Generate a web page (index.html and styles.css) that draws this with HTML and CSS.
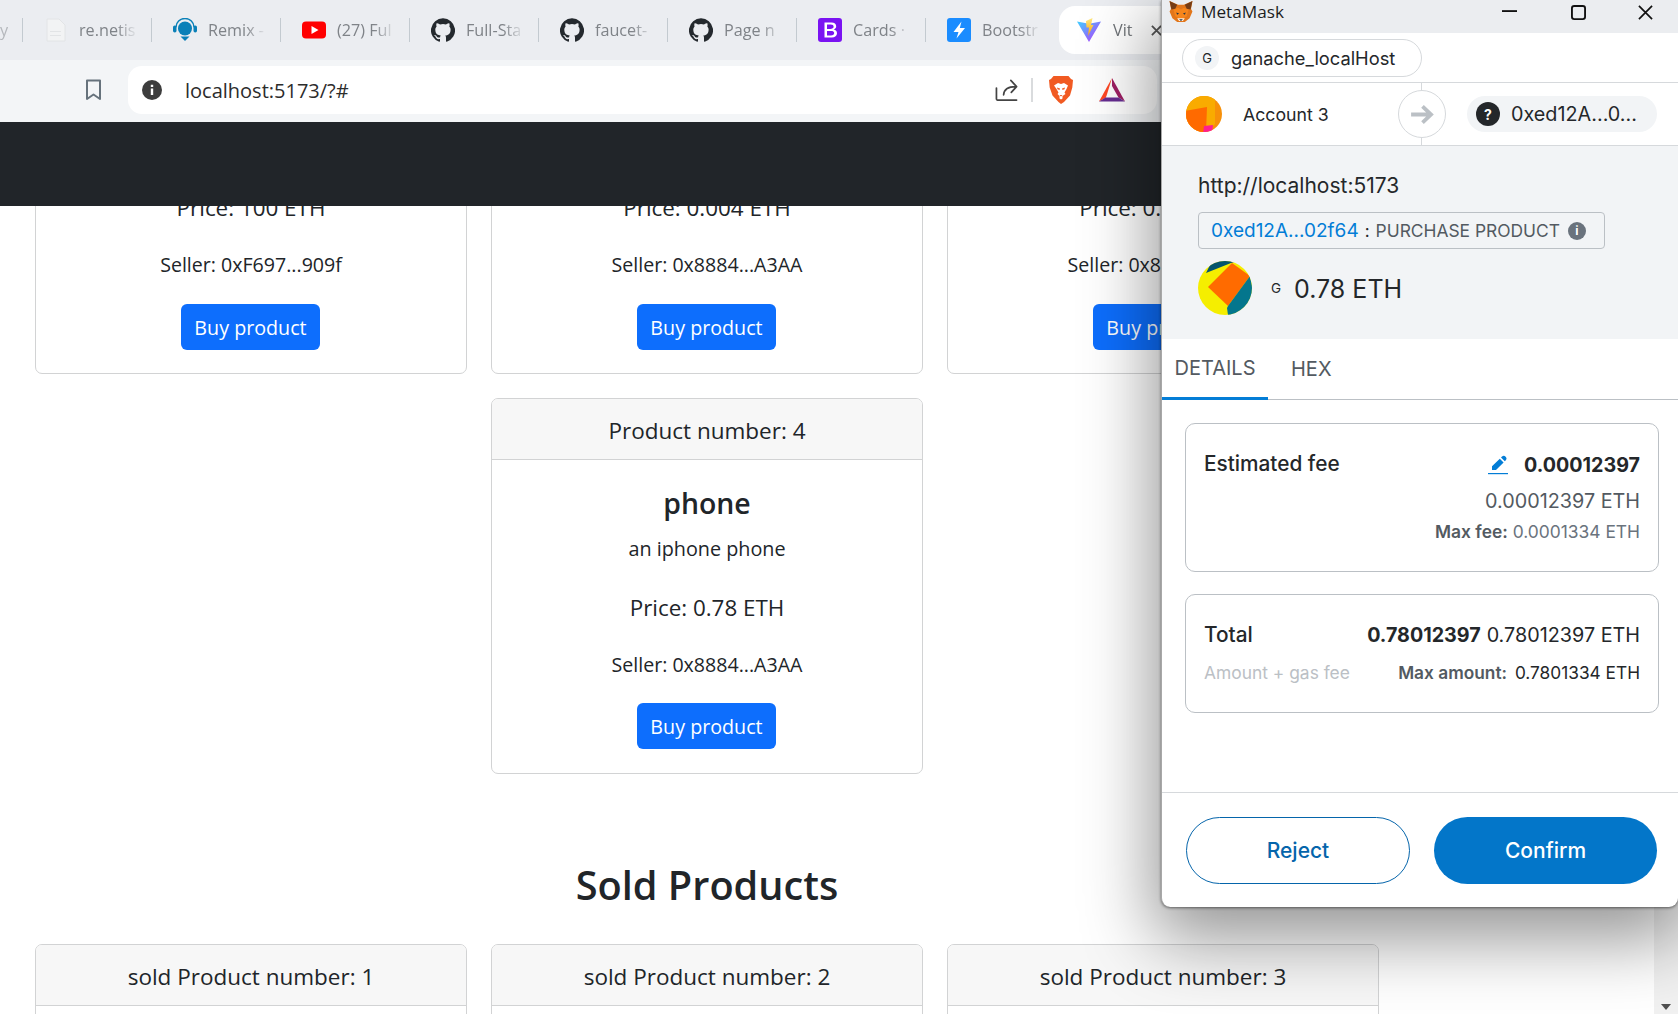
FILE: index.html
```html
<!DOCTYPE html>
<html lang="en">
<head>
<meta charset="utf-8">
<title>Vite App</title>
<link rel="stylesheet" href="styles.css">
</head>
<body>
<svg class="defs" width="0" height="0" aria-hidden="true">
  <symbol id="gh" viewBox="0 0 24 24"><path fill="#24292e" d="M12 .3a12 12 0 0 0-3.8 23.4c.6.1.8-.3.8-.6v-2c-3.3.7-4-1.6-4-1.6-.6-1.4-1.4-1.8-1.4-1.8-1-.7.1-.7.1-.7 1.2 0 1.9 1.2 1.9 1.2 1 1.8 2.8 1.3 3.5 1 0-.8.4-1.3.7-1.6-2.7-.3-5.5-1.3-5.5-6 0-1.2.5-2.3 1.3-3.1-.2-.4-.6-1.6 0-3.2 0 0 1-.3 3.4 1.2a11.5 11.5 0 0 1 6 0c2.3-1.5 3.3-1.2 3.3-1.2.6 1.6.2 2.8 0 3.2.9.8 1.3 1.9 1.3 3.2 0 4.6-2.8 5.6-5.5 5.9.5.4.9 1 .9 2.2v3.3c0 .3.1.7.8.6A12 12 0 0 0 12 .3"/></symbol>
</svg>
<div class="screen">
  <div class="tabstrip">
    <div class="tab tab-cut"><span class="tab-text">y</span></div>
    <div class="tab">
      <svg class="fav" viewBox="0 0 20 24"><path fill="#f2f3f4" stroke="#e2e4e6" d="M1 1h12l6 6v16H1z"/><path fill="#e2e4e6" d="M4 13h11v1H4zM4 17h11v1H4z"/></svg>
      <span class="tab-text">re.netis</span>
    </div>
    <div class="tab">
      <svg class="fav" viewBox="0 0 24 24"><path fill="none" stroke="#0a80b8" stroke-width="1.500" d="M3 9a9 8.500 0 0 1 18 0"/><rect y="7.500" width="3.500" height="7" rx="1.700" fill="#0a80b8"/><rect x="20.500" y="7.500" width="3.500" height="7" rx="1.700" fill="#0a80b8"/><circle cx="12" cy="10.500" r="7" fill="#0a80b8"/><path fill="#0a80b8" d="M7.500 18.500h9L12 23z"/></svg>
      <span class="tab-text">Remix -</span>
    </div>
    <div class="tab">
      <svg class="fav" viewBox="0 0 24 24"><rect y="3.500" width="24" height="17" rx="4" fill="#f00"/><path fill="#fff" d="M9.500 8v8l7-4z"/></svg>
      <span class="tab-text">(27) Ful</span>
    </div>
    <div class="tab">
      <svg class="fav"><use href="#gh"/></svg>
      <span class="tab-text">Full-Sta</span>
    </div>
    <div class="tab">
      <svg class="fav"><use href="#gh"/></svg>
      <span class="tab-text">faucet-</span>
    </div>
    <div class="tab">
      <svg class="fav"><use href="#gh"/></svg>
      <span class="tab-text">Page n</span>
    </div>
    <div class="tab">
      <svg class="fav" viewBox="0 0 24 24"><rect width="24" height="24" rx="3" fill="#7a12f2"/><path fill="#fff" fill-rule="evenodd" d="M6.500 4.500h7c3 0 4.700 1.500 4.700 3.800 0 1.600-1 2.900-2.500 3.300 2 .3 3.300 1.700 3.300 3.700 0 2.700-2 4.200-5.200 4.200H6.500zM9 6.600v4.300h3.300c2 0 3.300-.8 3.300-2.200s-1-2.100-2.800-2.100zM9 13v4.400h4c2 0 3.200-.8 3.200-2.300S15 13 12.800 13z"/></svg>
      <span class="tab-text">Cards ·</span>
    </div>
    <div class="tab tab-last">
      <svg class="fav" viewBox="0 0 24 24"><rect width="24" height="24" rx="3" fill="#1a8cff"/><path fill="#fff" d="M14.500 3.500 6.500 14h5l-2 6.500L18 10h-5.200z"/></svg>
      <span class="tab-text">Bootstr</span>
    </div>
    <div class="tab tab-active">
      <svg class="fav" viewBox="0 0 24 24"><defs><linearGradient id="vite-a" x1="0" y1="0" x2="1" y2="1"><stop offset="0" stop-color="#41d1ff"/><stop offset="1" stop-color="#bd34fe"/></linearGradient><linearGradient id="vite-b" x1="0" y1="0" x2="0" y2="1"><stop offset="0" stop-color="#ffea83"/><stop offset="1" stop-color="#ffa800"/></linearGradient></defs><path fill="url(#vite-a)" d="M0 3.500 12 24 24 3.500l-8 1.500-4 .8-4-.8z"/><path fill="url(#vite-b)" d="M9 3 15.500 0 14 7h2.500L11 18l1-8.500H9.500z"/></svg>
      <span class="tab-text tab-text-active">Vit</span>
      <svg class="tab-close" viewBox="0 0 12 12"><path stroke="#555" stroke-width="2" d="m1 1 10 10M11 1 1 11"/></svg>
    </div>
  </div>

  <div class="toolbar">
    <svg class="bookmark" viewBox="0 0 17 22"><path fill="none" stroke="#66727c" stroke-width="2" stroke-linejoin="round" d="M2 1.500h13V20l-6.500-4.500L2 20z"/></svg>
    <div class="address">
      <svg class="site-info" viewBox="0 0 20 20"><circle cx="10" cy="10" r="10" fill="#3d3d3d"/><path fill="#fff" d="M8.800 8.500h2.400V15H8.800zM8.800 4.800h2.400v2.300H8.800z"/></svg>
      <span class="url">localhost:5173/?#</span>
      <div class="address-actions">
        <svg class="share" viewBox="0 0 24 24"><path fill="none" stroke="#444" stroke-width="1.800" stroke-linecap="round" stroke-linejoin="round" d="M1.500 10v11.500a1 1 0 0 0 1 1h20M9 17c.5-6 5-8.500 12.500-8.500M16.500 2l6 6.500-5.500 6"/></svg>
        <span class="addr-sep"></span>
        <svg class="brave" viewBox="0 0 24 28"><path fill="#f15a22" d="M4.500 0h15l2.500 3 2 1-.7 7.500-2.300 8-6 6.500L12 28l-2.500-2-6-6.500-2.800-8L0 4l2-1z"/><path fill="#fff" d="M5 9.500 9 7l3 1 3-1 4 2.500-1.500 3.500-2 3.500 1 1.500L13.500 20v2.500l-1.500 1-1.500-1V20L8.500 18l1-1.500-2-3.500z"/><path fill="#f15a22" d="M8 11.500l3 1-.5 1.500-2-.8zM16 11.500l-3 1 .5 1.500 2-.8zM10.500 19h3L12 20.500z"/></svg>
        <svg class="bat" viewBox="0 0 26 24"><path fill="#ff4724" d="M13 0 0 23.500l7-4z"/><path fill="#9e1f63" d="m13 0 13 23.500-6.500-4L13 8z"/><path fill="#662d91" d="M0 23.500h26l-6.500-4H6.500z"/><path fill="#fff" d="M13 10.500 7.500 19h11z"/></svg>
      </div>
    </div>
  </div>

  <div class="viewport">
    <div class="navbar"></div>
    <main class="page">
      <section class="card-row">
        <article class="card card-cut">
          <div class="card-body">
            <p class="card-price">Price: 100 ETH</p>
            <p class="card-seller">Seller: 0xF697...909f</p>
            <a class="buy" href="#">Buy product</a>
          </div>
        </article>
        <article class="card card-cut">
          <div class="card-body">
            <p class="card-price">Price: 0.004 ETH</p>
            <p class="card-seller">Seller: 0x8884...A3AA</p>
            <a class="buy" href="#">Buy product</a>
          </div>
        </article>
        <article class="card card-cut">
          <div class="card-body">
            <p class="card-price">Price: 0.005 ETH</p>
            <p class="card-seller">Seller: 0x8884...A3AA</p>
            <a class="buy" href="#">Buy product</a>
          </div>
        </article>
        <article class="card">
          <header class="card-head">Product number: 4</header>
          <div class="card-body">
            <h5 class="card-name">phone</h5>
            <p class="card-desc">an iphone phone</p>
            <p class="card-price">Price: 0.78 ETH</p>
            <p class="card-seller">Seller: 0x8884...A3AA</p>
            <a class="buy" href="#">Buy product</a>
          </div>
        </article>
      </section>
      <h2 class="section-title">Sold Products</h2>
      <section class="card-row">
        <article class="card"><header class="card-head">sold Product number: 1</header><div class="card-body"></div></article>
        <article class="card"><header class="card-head">sold Product number: 2</header><div class="card-body"></div></article>
        <article class="card"><header class="card-head">sold Product number: 3</header><div class="card-body"></div></article>
      </section>
    </main>
    <div class="scrollbar"><span class="scroll-arrow"></span></div>
  </div>

  <aside class="popup">
    <div class="win-title">
      <svg class="fox" viewBox="0 0 24 22"><path fill="#e2761b" d="M0 0l9 4h6l9-4-1.500 8.500L24 11l-3 7-5 4H8l-5-4-3-7 1.500-2.500z"/><path fill="#f6851b" d="M4 9l5-2 3 2 3-2 5 2-2 7-4 2h-4l-4-2z"/><path fill="#763d16" d="M0 0l8 4-2 4-4 1zM24 0l-8 4 2 4 4 1z"/><path fill="#fff1e0" d="M8 18h8l-2 3h-4z"/><path fill="#233447" d="M7 12l3 1-2 1.500zM17 12l-3 1 2 1.500zM10 19h4l-2 2z"/></svg>
      <span class="win-name">MetaMask</span>
      <div class="win-controls">
        <svg class="win-btn win-min" viewBox="0 0 16 16"><path stroke="#111" stroke-width="2" d="M0 6.500h16"/></svg>
        <svg class="win-btn" viewBox="0 0 16 16"><rect x="1" y="1" width="14" height="14" rx="2.500" fill="none" stroke="#111" stroke-width="2"/></svg>
        <svg class="win-btn" viewBox="0 0 16 16"><path stroke="#111" stroke-width="1.800" d="m1 1 14 14M15 1 1 15"/></svg>
      </div>
    </div>

    <div class="net-row">
      <div class="net-pill"><span class="net-dot">G</span><span class="net-name">ganache_localHost</span></div>
    </div>

    <div class="acct-row">
      <div class="acct-from">
        <svg class="acct-avatar" viewBox="0 0 36 36"><defs><clipPath id="av1"><circle cx="18" cy="18" r="18"/></clipPath></defs><g clip-path="url(#av1)"><rect width="36" height="36" fill="#f79009"/><path fill="#f9ab00" d="M0 0h29v28l-8 8H0z"/><path fill="#ff6a00" d="M-2 15l23-4-1 25H-2z"/><path fill="#ff1f8f" d="M18 30l9-1-1 9h-9z"/></g></svg>
        <span class="acct-name">Account 3</span>
      </div>
      <div class="acct-arrow">
        <svg viewBox="0 0 24 20"><path fill="none" stroke="#bbc0c5" stroke-width="4" d="M0 10h21M12 1.500 21 10l-9 8.500"/></svg>
      </div>
      <div class="acct-to">
        <span class="acct-q">?</span>
        <span class="acct-addr">0xed12A...0...</span>
      </div>
    </div>

    <div class="summary">
      <div class="origin">http://localhost:5173</div>
      <div class="method">
        <span class="method-addr">0xed12A...02f64</span>
        <span class="method-colon">:</span>
        <span class="method-name">PURCHASE PRODUCT</span>
        <span class="method-info">i</span>
      </div>
      <div class="amount">
        <svg class="amount-avatar" viewBox="0 0 54 54"><defs><clipPath id="av2"><circle cx="27" cy="27" r="27"/></clipPath></defs><g clip-path="url(#av2)"><rect width="54" height="54" fill="#f5ee00"/><path fill="#04546e" d="M8 12 14 0h26l-7 2z"/><path fill="#ff6b00" d="M34 2 52 15 30 45 10 26z"/><path fill="#04768d" d="M52 15 60 54H30l-1-7 1-2z"/></g></svg>
        <span class="amount-g">G</span>
        <span class="amount-val">0.78 ETH</span>
      </div>
    </div>

    <div class="mm-tabs">
      <span class="mm-tab mm-tab-on">DETAILS</span>
      <span class="mm-tab">HEX</span>
    </div>

    <div class="mm-content">
      <div class="fee-box fee-est">
        <div class="fee-line">
          <span class="fee-label">Estimated fee</span>
          <span class="fee-right">
            <svg class="pencil" viewBox="0 0 20 20"><path fill="#037dd6" d="M14 1.500a2.700 2.700 0 0 1 3.800 3.800l-1 1-3.800-3.800zM11.800 3.700l3.800 3.800-7.600 7.600H4v-3.900z"/><path fill="#037dd6" d="M0 18h20v1.200H0z"/></svg>
            <b class="fee-bold">0.00012397</b>
          </span>
        </div>
        <div class="fee-sub">0.00012397 ETH</div>
        <div class="fee-small"><b>Max fee:</b> 0.0001334 ETH</div>
      </div>
      <div class="fee-box fee-total">
        <div class="fee-line">
          <span class="fee-label">Total</span>
          <span class="fee-right"><b class="fee-bold">0.78012397</b> <span class="fee-dark">0.78012397 ETH</span></span>
        </div>
        <div class="fee-line fee-line2">
          <span class="fee-hint">Amount + gas fee</span>
          <span class="fee-small2"><b>Max amount:</b> <span class="fee-dark2">0.7801334 ETH</span></span>
        </div>
      </div>
    </div>

    <div class="mm-footer">
      <a class="mm-btn mm-reject" href="#">Reject</a>
      <a class="mm-btn mm-confirm" href="#">Confirm</a>
    </div>
  </aside>
</div>
</body>
</html>
```

FILE: styles.css
```css
* { box-sizing: border-box; }
html, body { margin: 0; padding: 0; }
body { font-family: "Open Sans", "Noto Sans", sans-serif; color: #212529; background: #fff; }
.defs { position: absolute; }
.screen { position: relative; width: 1678px; height: 1014px; overflow: hidden; display: flex; flex-direction: column; }

/* browser chrome */
.tabstrip { height: 60px; flex: none; background: #ebedf1; display: flex; align-items: center; }
.tab { position: relative; flex: none; width: 129px; height: 24px; padding-left: 21px; display: flex; align-items: center; border-right: 1.500px solid #c3cad0; }
.tab-cut { width: 23px; padding-left: 0; justify-content: flex-end; overflow: hidden; }
.tab-cut .tab-text { width: auto; margin: 0 14px 1px 0; opacity: .5; -webkit-mask-image: none; mask-image: none; }
.tab-last { border-right: 0; }
.fav { flex: none; width: 24px; height: 24px; }
.tab-text { margin: 0 0 1px 11px; width: 62px; overflow: hidden; white-space: nowrap; font-size: 16.200px; color: #7f8388; -webkit-mask-image: linear-gradient(90deg, #000 60%, transparent 95%); mask-image: linear-gradient(90deg, #000 60%, transparent 95%); }
.tab-active { height: 48px; width: 135px; margin-left: 4px; padding-left: 18px; background: #fff; border: 0; border-radius: 16px 0 0 16px; }
.tab-text-active { width: 28px; margin-left: 12px; color: #6f7377; }
.tab-close { width: 11px; height: 11px; margin-left: 10px; flex: none; }

.toolbar { height: 62px; flex: none; background: #f3f5f7; display: flex; align-items: flex-start; padding: 6px 0 0 85px; position: relative; z-index: 1; }
.bookmark { width: 17px; height: 22px; margin: 13px 26px 0 0; flex: none; }
.address { width: 1029px; height: 48px; background: #fff; border-radius: 14px; display: flex; align-items: center; padding: 0 32px 0 14px; }
.site-info { width: 20px; height: 20px; flex: none; }
.url { margin-left: 23px; font-size: 20px; color: #2c2c2c; }
.address-actions { margin-left: auto; display: flex; align-items: center; }
.share { width: 23px; height: 24px; }
.addr-sep { width: 2px; height: 24px; background: #d9dbdd; margin: 0 16px 0 13px; }
.brave { width: 24px; height: 28px; margin-right: 26px; }
.bat { width: 26px; height: 24px; }

/* page */
.viewport { position: relative; flex: 1; min-height: 0; overflow: hidden; display: flex; }
.navbar { position: absolute; left: 0; right: 0; top: 0; height: 84px; background: #212529; z-index: 2; }
.page { flex: 1; min-width: 0; margin-top: 70px; padding-left: 35px; }
.scrollbar { position: relative; width: 24px; flex: none; background: #f1f1f1; }
.scroll-arrow { position: absolute; left: 7px; bottom: 4px; border: 5px solid transparent; border-top: 6px solid #505050; border-bottom: 0; }
.card-row { width: 1344px; display: flex; flex-wrap: wrap; justify-content: center; gap: 24px; }
.card { width: 432px; border: 1px solid #d2d3d4; border-radius: 7px; background: #fff; overflow: hidden; }
.card-head { height: 61px; padding-top: 2px; background: #f7f7f7; border-bottom: 1px solid #d2d3d4; display: flex; align-items: center; justify-content: center; font-size: 22.500px; color: #212529; }
.card-body { padding: 25px 0 24px; text-align: center; display: flex; flex-direction: column; align-items: center; min-height: 313px; }
.card-name { margin: 0; font-size: 28.400px; line-height: 36px; font-weight: 600; }
.card-desc { margin: 13px 0 0; font-size: 19.800px; line-height: 29px; }
.card-price { margin: 30px 0 0; font-size: 22.400px; line-height: 29px; }
.card-seller { margin: 28px 0 0; font-size: 19.600px; line-height: 29px; }
.card-cut .card-body { padding: 0 0 23px; min-height: 0; }
.card-cut .card-price { margin-top: 0; }
.buy { margin: 24px 1px 0 0; width: 139px; height: 46px; border-radius: 6px; background: #0d6efd; color: #fff; text-decoration: none; font-size: 19.700px; display: flex; align-items: center; justify-content: center; }
.card-cut .buy { margin-top: 25px; }
.section-title { margin: 81px 0 28px; width: 1344px; text-align: center; font-size: 39.700px; line-height: 61px; font-weight: 600; color: #212529; }

/* metamask */
.popup { position: absolute; left: 1161px; top: 0; width: 517px; height: 907px; background: #fff; border-left: 1px solid #a8a8a8; border-radius: 0 0 9px 9px; box-shadow: 0 1px 3px rgba(0,0,0,.5), 0 24px 70px 8px rgba(0,0,0,.42); z-index: 5; display: flex; flex-direction: column; font-family: "Inter", "Lato", sans-serif; color: #24272a; }
.win-title { height: 33px; flex: none; background: #ebedf0; display: flex; align-items: center; padding: 0 25px 9px 7px; font-family: "Open Sans", sans-serif; }
.fox { width: 24px; height: 21px; flex: none; margin-top: -2px; }
.win-name { margin: -2px 0 0 8px; font-size: 17.200px; color: #1d1d1d; }
.win-controls { margin-left: auto; display: flex; gap: 52px; }
.win-btn { width: 15px; height: 15px; }
.win-min { position: relative; left: -2px; }
.net-row { height: 50px; flex: none; padding: 6px 0 0 20px; border-bottom: 1px solid #d6d9dc; }
.net-pill { width: 240px; height: 38px; border: 1px solid #d6d9dc; border-radius: 19px; display: flex; align-items: center; padding-left: 12px; }
.net-dot { width: 24px; height: 24px; border-radius: 50%; background: #f2f4f6; display: flex; align-items: center; justify-content: center; font-size: 13px; color: #24272a; }
.net-name { margin-left: 12px; font-size: 18.300px; white-space: nowrap; }
.acct-row { position: relative; height: 63px; flex: none; display: flex; align-items: center; border-bottom: 1px solid #d6d9dc; padding: 0 21px 0 24px; }
.acct-from { display: flex; align-items: center; width: 257px; }
.acct-avatar { width: 36px; height: 36px; flex: none; }
.acct-name { margin-left: 21px; font-size: 17.700px; color: #24272a; white-space: nowrap; }
.acct-row::before { content: ""; position: absolute; left: 259px; top: 0; bottom: 0; width: 1px; background: #d6d9dc; }
.acct-arrow { position: relative; width: 48px; height: 48px; margin-left: -22px; border: 1px solid #d6d9dc; border-radius: 50%; background: #fff; display: flex; align-items: center; justify-content: center; flex: none; }
.acct-arrow svg { width: 23px; height: 19px; }
.acct-to { margin-left: 21px; width: 190px; height: 36px; border-radius: 18px; background: #f2f4f6; display: flex; align-items: center; padding-left: 9px; flex: none; }
.acct-q { width: 24px; height: 24px; border-radius: 50%; background: #24272a; color: #fff; font-size: 14px; font-weight: 700; display: flex; align-items: center; justify-content: center; flex: none; }
.acct-addr { margin-left: 11px; font-size: 19.800px; white-space: nowrap; }
.summary { height: 193px; flex: none; background: #f2f4f6; padding: 27px 0 0 36px; }
.origin { font-size: 21px; line-height: 26px; }
.method { margin-top: 13px; width: 407px; height: 37px; border: 1px solid #bbc0c5; border-radius: 4px; display: flex; align-items: center; padding-left: 12px; }
.method-addr { color: #037dd6; font-size: 19px; white-space: nowrap; }
.method-colon { margin: 0 6px; font-size: 17px; }
.method-name { color: #535a61; font-size: 17.400px; white-space: nowrap; }
.method-info { margin-left: 8px; width: 18px; height: 18px; border-radius: 50%; background: #6a737d; color: #fff; font-size: 12px; font-weight: 700; display: flex; align-items: center; justify-content: center; }
.amount { margin-top: 12px; display: flex; align-items: center; }
.amount-avatar { width: 54px; height: 54px; flex: none; }
.amount-g { margin-left: 19px; font-size: 13.500px; color: #24272a; }
.amount-val { margin: 2px 0 0 13px; font-size: 25px; }
.mm-tabs { height: 61px; flex: none; display: flex; border-bottom: 1px solid #bbc0c5; }
.mm-tab { width: 106px; margin-bottom: -1px; display: flex; align-items: center; justify-content: center; font-size: 20px; color: #535a61; padding: 0 0 2px; }
.mm-tab + .mm-tab { width: auto; padding: 0 23px 2px; }
.mm-tab-on { border-bottom: 3px solid #037dd6; padding-bottom: 0; }
.mm-content { flex: 1; padding: 23px 19px 0 23px; display: flex; flex-direction: column; gap: 22px; }
.fee-box { border: 1px solid #bbc0c5; border-radius: 10px; padding: 0 18px; }
.fee-est { height: 149px; padding-top: 25px; }
.fee-total { height: 119px; padding-top: 25px; }
.fee-line { display: flex; justify-content: space-between; align-items: center; height: 28px; }
.fee-line2 { margin-top: 10px; }
.fee-label { font-size: 20.800px; font-weight: 500; color: #24272a; white-space: nowrap; }
.fee-right { display: flex; align-items: center; gap: 6px; white-space: nowrap; padding-top: 2px; }
.fee-bold { font-size: 19.700px; font-weight: 700; }
.fee-est .fee-right { padding-top: 4px; }
.fee-est .fee-bold { margin-left: 10px; }
.pencil { width: 20px; height: 20px; }
.fee-sub { text-align: right; font-size: 19.800px; line-height: 28px; margin-top: 10px; color: #535a61; }
.fee-small { text-align: right; font-size: 17.400px; line-height: 24px; margin-top: 5px; color: #6a737d; }
.fee-small b { font-weight: 600; color: #535a61; }
.fee-dark { font-size: 19.800px; }
.fee-hint { font-size: 17.400px; color: #bbc0c5; white-space: nowrap; }
.fee-small2 { font-size: 17.300px; white-space: nowrap; }
.fee-small2 b { font-weight: 600; color: #535a61; }
.fee-dark2 { margin-left: 3px; color: #24272a; }
.mm-footer { height: 115px; flex: none; border-top: 1px solid #d6d9dc; display: flex; justify-content: space-between; align-items: flex-start; padding: 24px 21px 0 24px; }
.mm-btn { height: 67px; border-radius: 34px; display: flex; align-items: center; justify-content: center; font-size: 21px; font-weight: 500; text-decoration: none; }
.mm-reject { width: 224px; border: 1px solid #0565ab; color: #0565ab; background: #fff; }
.mm-confirm { width: 223px; background: #0376c9; color: #fff; }
```
